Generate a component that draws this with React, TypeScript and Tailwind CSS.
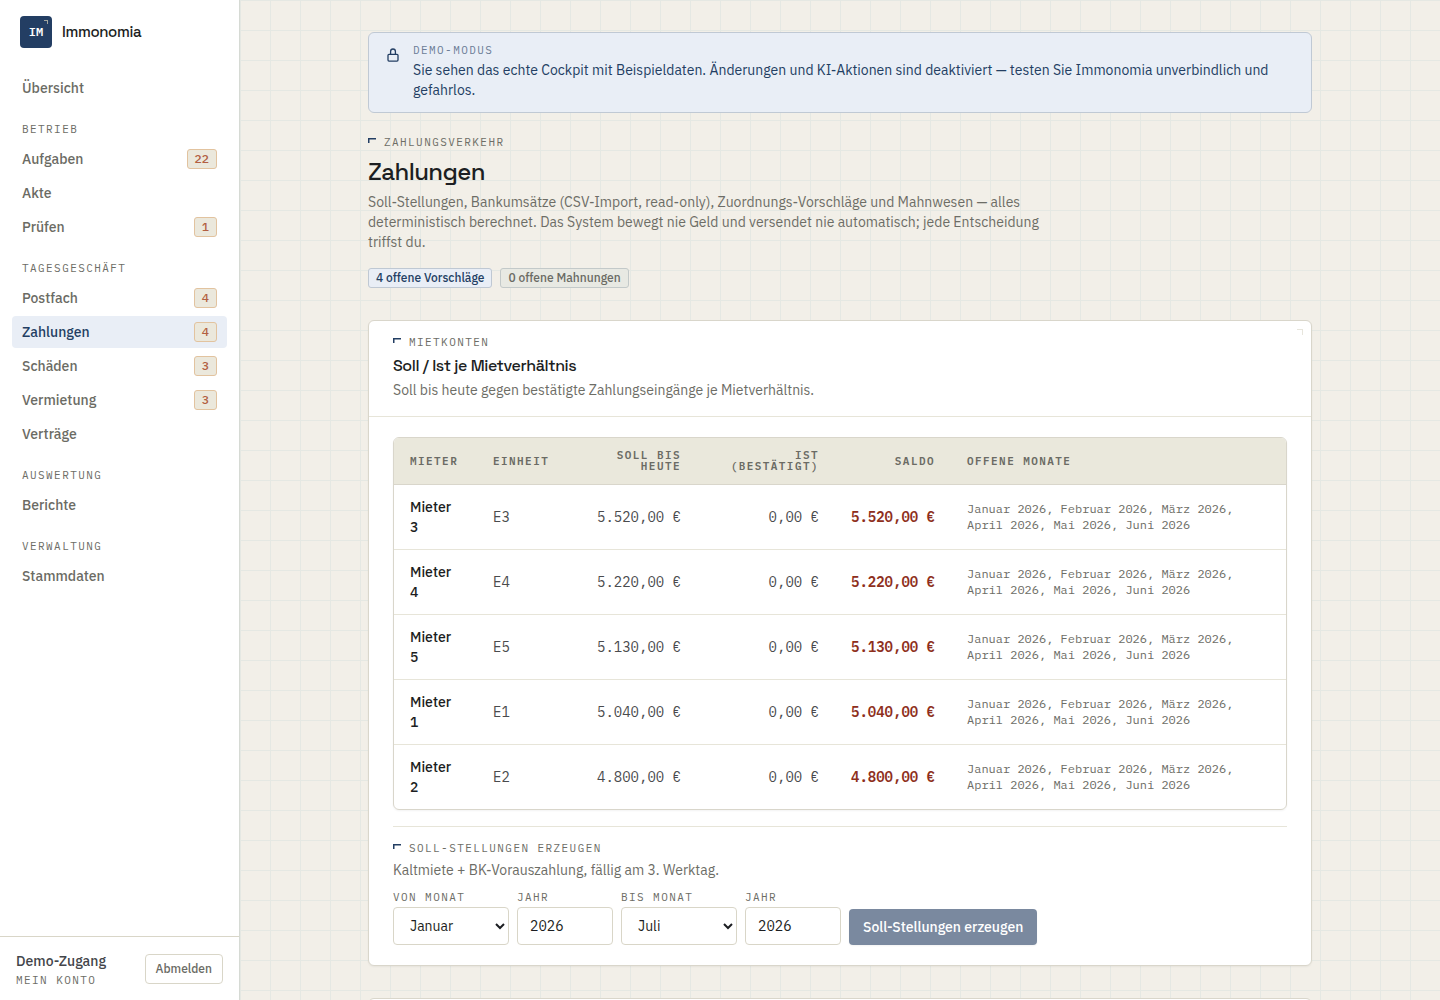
import { useState } from 'react';
import clsx from 'clsx';

const navGroups = [
  {
    title: '',
    items: [{ label: 'Übersicht', count: 0 }],
  },
  {
    title: 'Betrieb',
    items: [
      { label: 'Aufgaben', count: 22 },
      { label: 'Akte', count: 0 },
      { label: 'Prüfen', count: 1 },
    ],
  },
  {
    title: 'Tagesgeschäft',
    items: [
      { label: 'Postfach', count: 4 },
      { label: 'Zahlungen', count: 4 },
      { label: 'Schäden', count: 3 },
      { label: 'Vermietung', count: 3 },
      { label: 'Verträge', count: 0 },
    ],
  },
  {
    title: 'Auswertung',
    items: [{ label: 'Berichte', count: 0 }],
  },
  {
    title: 'Verwaltung',
    items: [{ label: 'Stammdaten', count: 0 }],
  },
];

const openMonths = 'Januar 2026, Februar 2026, März 2026, April 2026, Mai 2026, Juni 2026';

const accounts = [
  { tenant: 'Mieter 3', unit: 'E3', due: '5.520,00 €', paid: '0,00 €', balance: '5.520,00 €' },
  { tenant: 'Mieter 4', unit: 'E4', due: '5.220,00 €', paid: '0,00 €', balance: '5.220,00 €' },
  { tenant: 'Mieter 5', unit: 'E5', due: '5.130,00 €', paid: '0,00 €', balance: '5.130,00 €' },
  { tenant: 'Mieter 1', unit: 'E1', due: '5.040,00 €', paid: '0,00 €', balance: '5.040,00 €' },
  { tenant: 'Mieter 2', unit: 'E2', due: '4.800,00 €', paid: '0,00 €', balance: '4.800,00 €' },
];

const months = [
  'Januar', 'Februar', 'März', 'April', 'Mai', 'Juni',
  'Juli', 'August', 'September', 'Oktober', 'November', 'Dezember',
];

const mono = "font-['IBM_Plex_Mono','Liberation_Mono',monospace]";
const display = "font-['Space_Grotesk',Inter,sans-serif]";
const label = clsx(mono, 'text-[11px] leading-none tracking-[0.13em] uppercase');
const field = 'h-[38px] rounded border border-[#d9d6c8] bg-white px-3 text-sm text-[#1c1e22]';

function LockIcon() {
  return (
    <svg viewBox="0 0 16 16" className="mt-0.5 size-4 shrink-0" fill="none" stroke="currentColor" strokeWidth="1.3" strokeLinejoin="round" aria-hidden="true">
      <rect x="3" y="7.3" width="10" height="6.8" rx="1" />
      <path d="M5.6 7.3V4.4a2.4 2.4 0 0 1 4.8 0v2.9" />
    </svg>
  );
}

function Eyebrow({ children }: { children: string }) {
  return (
    <div className={clsx(label, 'flex gap-2 text-[#6d6d66]')}>
      <svg viewBox="0 0 8 6" className="mt-px h-1.5 w-2" fill="none" stroke="#233e63" strokeWidth="1.5" aria-hidden="true">
        <path d="M.75 5V.75H8" />
      </svg>
      {children}
    </div>
  );
}

function Sidebar() {
  return (
    <aside className="sticky top-0 flex h-screen w-60 shrink-0 flex-col border-r border-[#d6dad4] bg-white">
      <div className="flex items-center gap-2.5 px-5 py-4">
        <div className={clsx(mono, 'relative flex size-8 items-center justify-center rounded bg-[#233e63] text-xs font-semibold text-white')}>
          IM
          <span className="absolute top-1 right-1 size-1 border-t border-r border-[#a3a79f]" />
        </div>
        <span className={clsx(display, 'text-[15px] font-medium tracking-tight text-[#1c1e22]')}>Immonomia</span>
      </div>

      <nav className="flex-1 overflow-y-auto px-3 py-2">
        {navGroups.map((group) => (
          <div key={group.title} className="mb-4">
            {group.title && (
              <div className={clsx(label, 'px-2.5 pt-1 pb-2 text-[#6d6d66]')}>{group.title}</div>
            )}
            <ul className="flex flex-col gap-0.5">
              {group.items.map((item) => (
                <li key={item.label}>
                  <a
                    href="#"
                    className={clsx(
                      'flex h-8 items-center justify-between rounded px-2.5 text-sm font-medium',
                      item.label === 'Zahlungen' ? 'bg-[#e9eef6] text-[#233e63]' : 'text-[#6b6b64]'
                    )}
                  >
                    {item.label}
                    {item.count > 0 && (
                      <span className={clsx(mono, 'flex h-5 items-center rounded-[3px] border border-[#e2c39f] bg-[#ebe8dc] px-[7px] text-xs font-medium text-[#b25f42]')}>
                        {item.count}
                      </span>
                    )}
                  </a>
                </li>
              ))}
            </ul>
          </div>
        ))}
      </nav>

      <div className="flex items-center justify-between border-t border-[#d9d6c8] px-4 py-3.5">
        <div>
          <div className="text-sm font-medium text-[#43454a]">Demo-Zugang</div>
          <div className={clsx(label, 'mt-1 text-[#6d6d66]')}>Mein Konto</div>
        </div>
        <button className="h-[30px] rounded border border-[#d9d6c8] bg-white px-2.5 text-xs font-medium text-[#6b6b64]">
          Abmelden
        </button>
      </div>
    </aside>
  );
}

function AccountsTable() {
  return (
    <div className="overflow-hidden rounded-md border border-[#d9d6cb] shadow-xs">
      <table className="w-full table-fixed text-sm">
        <colgroup>
          <col className="w-[83px]" />
          <col className="w-[87px]" />
          <col className="w-[133px]" />
          <col className="w-[138px]" />
          <col className="w-[116px]" />
          <col />
        </colgroup>
        <thead className="border-b border-[#d9d6cb] bg-[#eae8dc]">
          <tr className={clsx(label, 'text-left text-[#6b6b64]')}>
            <th className="px-4 py-3 font-semibold">Mieter</th>
            <th className="px-4 py-3 font-semibold">Einheit</th>
            <th className="px-4 py-3 text-right font-semibold">Soll bis heute</th>
            <th className="px-4 py-3 text-right font-semibold">Ist (bestätigt)</th>
            <th className="px-4 py-3 text-right font-semibold">Saldo</th>
            <th className="px-4 py-3 font-semibold">Offene Monate</th>
          </tr>
        </thead>
        <tbody className="divide-y divide-[#e7e5d9]">
          {accounts.map((row) => (
            <tr key={row.tenant} className={clsx(mono, 'text-[#4a4b4d]')}>
              <td className="px-4 py-3 font-['IBM_Plex_Sans',Roboto,sans-serif] font-medium text-[#1c1e22]">{row.tenant}</td>
              <td className="px-4 py-3">{row.unit}</td>
              <td className="px-4 py-3 text-right whitespace-nowrap">{row.due}</td>
              <td className="px-4 py-3 text-right whitespace-nowrap">{row.paid}</td>
              <td className="px-4 py-3 text-right font-semibold whitespace-nowrap text-[#8e2f1c]">{row.balance}</td>
              <td className="px-4 py-3 text-xs text-[#6d6d66]">{openMonths}</td>
            </tr>
          ))}
        </tbody>
      </table>
    </div>
  );
}

function ChargeForm() {
  const [from, setFrom] = useState('Januar');
  const [fromYear, setFromYear] = useState('2026');
  const [to, setTo] = useState('Juli');
  const [toYear, setToYear] = useState('2026');

  return (
    <form className="mt-3 flex flex-wrap items-end gap-2" onSubmit={(e) => e.preventDefault()}>
      <div className="flex flex-col gap-1">
        <label htmlFor="from-month" className={clsx(label, 'text-[#6d6d66]')}>Von Monat</label>
        <select id="from-month" value={from} onChange={(e) => setFrom(e.target.value)} className={clsx(field, 'w-[116px] pr-0')}>
          {months.map((m) => <option key={m}>{m}</option>)}
        </select>
      </div>
      <div className="flex flex-col gap-1">
        <label htmlFor="from-year" className={clsx(label, 'text-[#6d6d66]')}>Jahr</label>
        <input id="from-year" value={fromYear} onChange={(e) => setFromYear(e.target.value)} className={clsx(field, mono, 'w-24')} />
      </div>
      <div className="flex flex-col gap-1">
        <label htmlFor="to-month" className={clsx(label, 'text-[#6d6d66]')}>Bis Monat</label>
        <select id="to-month" value={to} onChange={(e) => setTo(e.target.value)} className={clsx(field, 'w-[116px] pr-0')}>
          {months.map((m) => <option key={m}>{m}</option>)}
        </select>
      </div>
      <div className="flex flex-col gap-1">
        <label htmlFor="to-year" className={clsx(label, 'text-[#6d6d66]')}>Jahr</label>
        <input id="to-year" value={toYear} onChange={(e) => setToYear(e.target.value)} className={clsx(field, mono, 'w-24')} />
      </div>
      <button disabled className="h-9 rounded bg-[#7a899f] px-3.5 text-sm font-medium text-white shadow-xs">
        Soll-Stellungen erzeugen
      </button>
    </form>
  );
}

export default function App() {
  return (
    <div className="flex h-screen overflow-hidden bg-[#f2efe8] bg-[linear-gradient(to_right,#e5e8e3_1px,transparent_1px),linear-gradient(to_bottom,#e5e8e3_1px,transparent_1px)] bg-[size:30px_30px] font-['IBM_Plex_Sans',Roboto,sans-serif] text-sm">
      <Sidebar />

      <main className="min-w-0 flex-1 overflow-y-auto [scrollbar-width:none]">
        <div className="mx-auto max-w-5xl px-10 py-8">
          {/* Demo banner */}
          <div className="flex gap-3 rounded-md border border-[#c0c9d4] bg-[#e9eef6] px-4 py-3 text-[#233e63]">
            <LockIcon />
            <div>
              <div className={clsx(label, 'mb-1 text-[#6c7d96]')}>Demo-Modus</div>
              <p>
                Sie sehen das echte Cockpit mit Beispieldaten. Änderungen und KI-Aktionen sind deaktiviert — testen Sie
                Immonomia unverbindlich und gefahrlos.
              </p>
            </div>
          </div>

          {/* Page header */}
          <header className="mt-6">
            <Eyebrow>Zahlungsverkehr</Eyebrow>
            <h1 className={clsx(display, 'mt-2 text-2xl font-medium tracking-tight text-[#1c1e22]')}>Zahlungen</h1>
            <p className="mt-1 max-w-2xl text-[#6d6d66]">
              Soll-Stellungen, Bankumsätze (CSV-Import, read-only), Zuordnungs-Vorschläge und Mahnwesen — alles
              deterministisch berechnet. Das System bewegt nie Geld und versendet nie automatisch; jede Entscheidung
              triffst du.
            </p>
            <div className="mt-4 flex gap-2 text-xs font-medium">
              <span className="flex h-5 items-center rounded-[3px] border border-[#bfc8d3] bg-[#e9eef6] px-[7px] text-[#233e63]">
                4 offene Vorschläge
              </span>
              <span className="flex h-5 items-center rounded-[3px] border border-[#c3c9c9] bg-[#e8e9e3] px-[7px] text-[#6b6b64]">
                0 offene Mahnungen
              </span>
            </div>
          </header>

          {/* Rent accounts */}
          <section className="relative mt-8 rounded-md border border-[#d9d6cb] bg-white shadow-xs">
            <span className="absolute top-2 right-2 size-1.5 border-t border-r border-[#e7e5dc]" />
            <div className="border-b border-[#e7e5d9] px-6 py-4">
              <Eyebrow>Mietkonten</Eyebrow>
              <h2 className={clsx(display, 'mt-2 text-base leading-5 font-medium tracking-tight text-[#1c1e22]')}>
                Soll / Ist je Mietverhältnis
              </h2>
              <p className="mt-1 text-[#6d6d66]">Soll bis heute gegen bestätigte Zahlungseingänge je Mietverhältnis.</p>
            </div>
            <div className="px-6 py-5">
              <AccountsTable />
              <div className="mt-4 border-t border-[#e7e5d9] pt-4">
                <Eyebrow>Soll-Stellungen erzeugen</Eyebrow>
                <p className="mt-1.5 text-[#6d6d66]">Kaltmiete + BK-Vorauszahlung, fällig am 3. Werktag.</p>
                <ChargeForm />
              </div>
            </div>
          </section>

          <section className="mt-8 h-24 rounded-md border border-[#d9d6cb] bg-white shadow-xs" />
        </div>
      </main>
    </div>
  );
}
